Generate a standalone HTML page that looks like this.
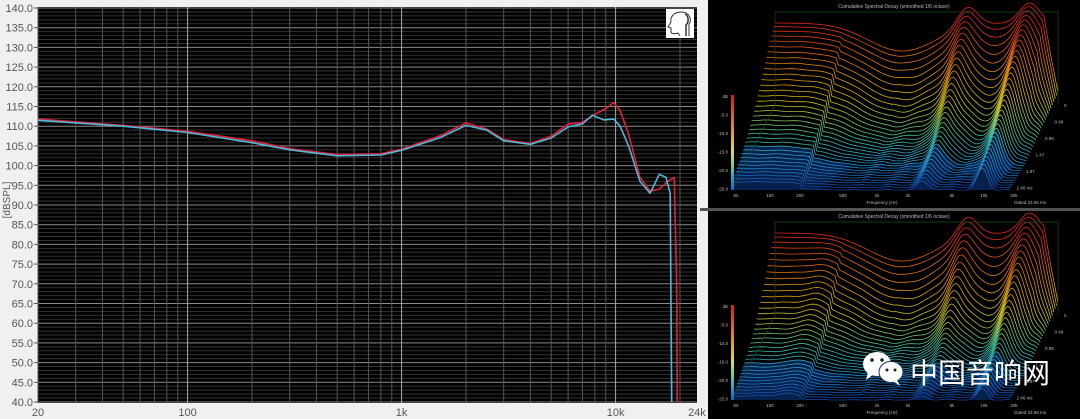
<!DOCTYPE html>
<html><head><meta charset="utf-8"><style>
html,body{margin:0;padding:0;background:#f0f0f0;width:1080px;height:419px;overflow:hidden;font-family:"Liberation Sans","Noto Sans CJK SC",sans-serif}
svg{position:absolute;left:0;top:0}
</style></head><body>
<svg id="s" width="1080" height="419" xmlns="http://www.w3.org/2000/svg">
<defs>
<linearGradient id="g1" gradientUnits="userSpaceOnUse" x1="0" y1="20" x2="0" y2="190">
<stop offset="0" stop-color="#e0201a"/><stop offset="0.3" stop-color="#e08a10"/><stop offset="0.5" stop-color="#c8c020"/><stop offset="0.68" stop-color="#40c0a0"/><stop offset="0.85" stop-color="#2090d0"/><stop offset="1" stop-color="#1040a0"/></linearGradient>
<linearGradient id="g2" gradientUnits="userSpaceOnUse" x1="0" y1="230" x2="0" y2="400">
<stop offset="0" stop-color="#e0201a"/><stop offset="0.3" stop-color="#e08a10"/><stop offset="0.5" stop-color="#c8c020"/><stop offset="0.68" stop-color="#40c0a0"/><stop offset="0.85" stop-color="#2090d0"/><stop offset="1" stop-color="#1040a0"/></linearGradient>
<linearGradient id="cb" x1="0" y1="0" x2="0" y2="1"><stop offset="0" stop-color="#d02020"/><stop offset="0.4" stop-color="#e0a020"/><stop offset="0.6" stop-color="#e0e040"/><stop offset="0.8" stop-color="#40c0c0"/><stop offset="1" stop-color="#2060c0"/></linearGradient>
</defs>
<rect x="38" y="7" width="659" height="396" fill="#000"/>
<g id="grid"></g>
<g id="curves"></g>
<g id="lab" font-size="11" fill="#555"></g>
<text x="10" y="200" font-size="10" fill="#555" transform="rotate(-90 10 200)" text-anchor="middle">[dBSPL]</text>
<rect x="666" y="9" width="28" height="29" fill="#fff"/>
<path d="M689 36 V24 C692 20 690 12 681 12 C673 12 670 18 671 22 L668 27 L671 28 L671 32 C671 34 676 34 678 33 L680 36" fill="none" stroke="#333" stroke-width="1"/>
<path d="M685 14 C689 16 689 22 686 25 V36" fill="none" stroke="#333" stroke-width="1.5"/>
<rect x="708" y="0" width="372" height="209" fill="#000"/>
<rect x="708" y="211" width="372" height="208" fill="#000"/>
<rect x="700" y="208" width="380" height="3" fill="#555"/>
<g id="p1"></g><g id="p2"></g>
</svg>
<script>
var S='http://www.w3.org/2000/svg';
function el(p,t,a,txt){var e=document.createElementNS(S,t);for(var k in a)e.setAttribute(k,a[k]);if(txt)e.textContent=txt;document.getElementById(p).appendChild(e);return e;}
function X(f){return 38+214*Math.log10(f/20);}
function Y(d){return 8+(140-d)*3.94;}
for(var d=40;d<=140;d++){var maj=d%5==0;el('grid','line',{x1:38,x2:697,y1:Y(d),y2:Y(d),stroke:maj?'#8a8a8a':'#333','stroke-width':1});}
[10,100,1000,10000].forEach(function(b){for(var m=1;m<10;m++){var f=b*m;if(f<20||f>24000)continue;el('grid','line',{x1:X(f),x2:X(f),y1:7,y2:403,stroke:m==1?'#aaa':'#555','stroke-width':1});}});
for(var d=40;d<=140;d+=5){el('lab','text',{x:33,y:Y(d)+4,'text-anchor':'end'},d.toFixed(1));el('lab','line',{x1:34,x2:38,y1:Y(d),y2:Y(d),stroke:'#555'});}
[[20,'20'],[100,'100'],[1000,'1k'],[10000,'10k'],[24000,'24k']].forEach(function(a){el('lab','text',{x:X(a[0]),y:416,'text-anchor':'middle'},a[1]);});
function pl(pts,c){var s=pts.map(function(p){return X(p[0]).toFixed(1)+','+Y(p[1]).toFixed(1);}).join(' ');el('curves','polyline',{points:s,fill:'none',stroke:c,'stroke-width':1.6,'stroke-linejoin':'round'});}
var red=[[20,111.8],[50,110.2],[100,108.7],[200,106.3],[300,104.3],[500,102.8],[800,103],[1000,104.2],[1500,107.5],[2000,110.8],[2500,109.3],[3000,106.6],[4000,105.6],[5000,107.5],[6000,110.5],[7000,111],[8000,113],[9000,114.5],[9800,116],[10500,114],[11500,108],[13000,97],[14500,93.5],[16000,94],[17500,96],[18800,97],[19300,70],[19400,40]];
var cy=[[20,111.5],[50,110],[100,108.4],[200,105.8],[300,104],[500,102.5],[800,102.7],[1000,103.9],[1500,107],[2000,110.2],[2500,109],[3000,106.3],[4000,105.4],[5000,107],[6000,109.8],[7000,110.6],[7800,112.8],[8800,111.6],[9800,111.8],[10500,110],[11500,105],[13000,96],[14500,93],[16000,97.8],[17200,97],[18000,93],[18300,40]];
pl(red,'#e0203a');pl(cy,'#50b8d8');
function G(u,c,w){return Math.exp(-Math.pow((u-c)/w,2));}
function base(u){var v=0.82-0.28*G(u,0.45,0.17)+0.2*G(u,0.68,0.05)+0.2*G(u,0.9,0.05);if(u>0.95)v-=(u-0.95)*14;return v;}
function wf(id,oy,grad,var2){
 var g=id;
 el(g,'text',{x:894,y:oy+8,'font-size':5,fill:'#bbb','text-anchor':'middle'},'Cumulative Spectral Decay (smoothed 1/6 octave)');
 var N=36;
 for(var i=0;i<N;i++){var t=i/(N-1);var x0=775-43*t,x1=1058-48*t,bl=oy+105+85*t;var pts=[];var te=Math.pow(t,1.4);
  for(var j=0;j<=140;j++){var u=j/140;var b=Math.max(0,base(u));
   var k=(var2?4.2:3.5)+(var2?6:5)*G(u,0.5,0.14)+3*G(u,0.8,0.05)+2.5*G(u,0.97,0.03)-2*G(u,0.68,0.04)-2*G(u,0.9,0.04)+(u<0.25?-1.2:0);
   var h=b*Math.exp(-te*k);
   h+=0.07*Math.exp(-t*2)*t*Math.sin(u*55+t*9)*(u>0.45?1:0.3);
   if(var2)h+=0.18*G(u,0.2,0.05)*Math.exp(-t*2.5)*t*2;
   h=Math.max(0,h);pts.push((x0+(x1-x0)*u).toFixed(1)+','+(bl-h*100).toFixed(1));}
  el(g,'polygon',{points:x0.toFixed(1)+','+bl+' '+pts.join(' ')+' '+x1.toFixed(1)+','+bl,fill:t>0.7?'#08204c':'#000',stroke:'none'});
  el(g,'polyline',{points:pts.join(' '),fill:'none',stroke:'url(#'+grad+')','stroke-width':0.8});}
 el(g,'polyline',{points:'732,'+(oy+190)+' 775,'+(oy+105)+' 775,'+(oy+12)+' 1058,'+(oy+12)+' 1058,'+(oy+105),fill:'none',stroke:'#1a4a1a','stroke-width':0.7});
 el(g,'rect',{x:731,y:oy+95,width:3,height:95,fill:'url(#cb)'});
 ['dB','-5.0','-10.0','-15.0','-20.0','-25.0'].forEach(function(s,k){el(g,'text',{x:728,y:oy+98+k*18.5,'font-size':4.5,fill:'#bbb','text-anchor':'end'},s);});
 [['50',736],['100',770],['200',800],['500',843],['1k',877],['2k',908],['5k',952],['10k',984],['20k',1014]].forEach(function(a){el(g,'text',{x:a[1],y:oy+197,'font-size':4.5,fill:'#bbb','text-anchor':'middle'},a[0]);});
 el(g,'text',{x:882,y:oy+204,'font-size':4.5,fill:'#bbb','text-anchor':'middle'},'Frequency (Hz)');
 el(g,'text',{x:1030,y:oy+204,'font-size':4.5,fill:'#bbb','text-anchor':'middle'},'Gated 23.56 ms');
 ['0','0.49','0.98','1.47','1.97','2.46 ms'].forEach(function(s,k){el(g,'text',{x:1064-9.5*k,y:oy+107+16.5*k,'font-size':4.5,fill:'#bbb'},s);});
}
wf('p1',0,'g1',false);wf('p2',210,'g2',true);
</script>
<svg width="1080" height="419" style="position:absolute;left:0;top:0">
<ellipse cx="877" cy="364" rx="14" ry="12" fill="#fff"/>
<path d="M868 372 L866 380 L874 374Z" fill="#fff"/>
<ellipse cx="891" cy="372" rx="12" ry="10.5" fill="#fff" stroke="#1a3a6a" stroke-width="1"/>
<path d="M897 380 L900 386 L893 381Z" fill="#fff"/>
<circle cx="872" cy="360" r="1.8" fill="#222"/><circle cx="882" cy="360" r="1.8" fill="#222"/>
<circle cx="887" cy="370" r="1.5" fill="#222"/><circle cx="895" cy="370" r="1.5" fill="#222"/>
<text x="910" y="383" font-size="28" fill="#fff" font-family="Noto Sans CJK SC, sans-serif">中国音响网</text>
</svg>
</body></html>
